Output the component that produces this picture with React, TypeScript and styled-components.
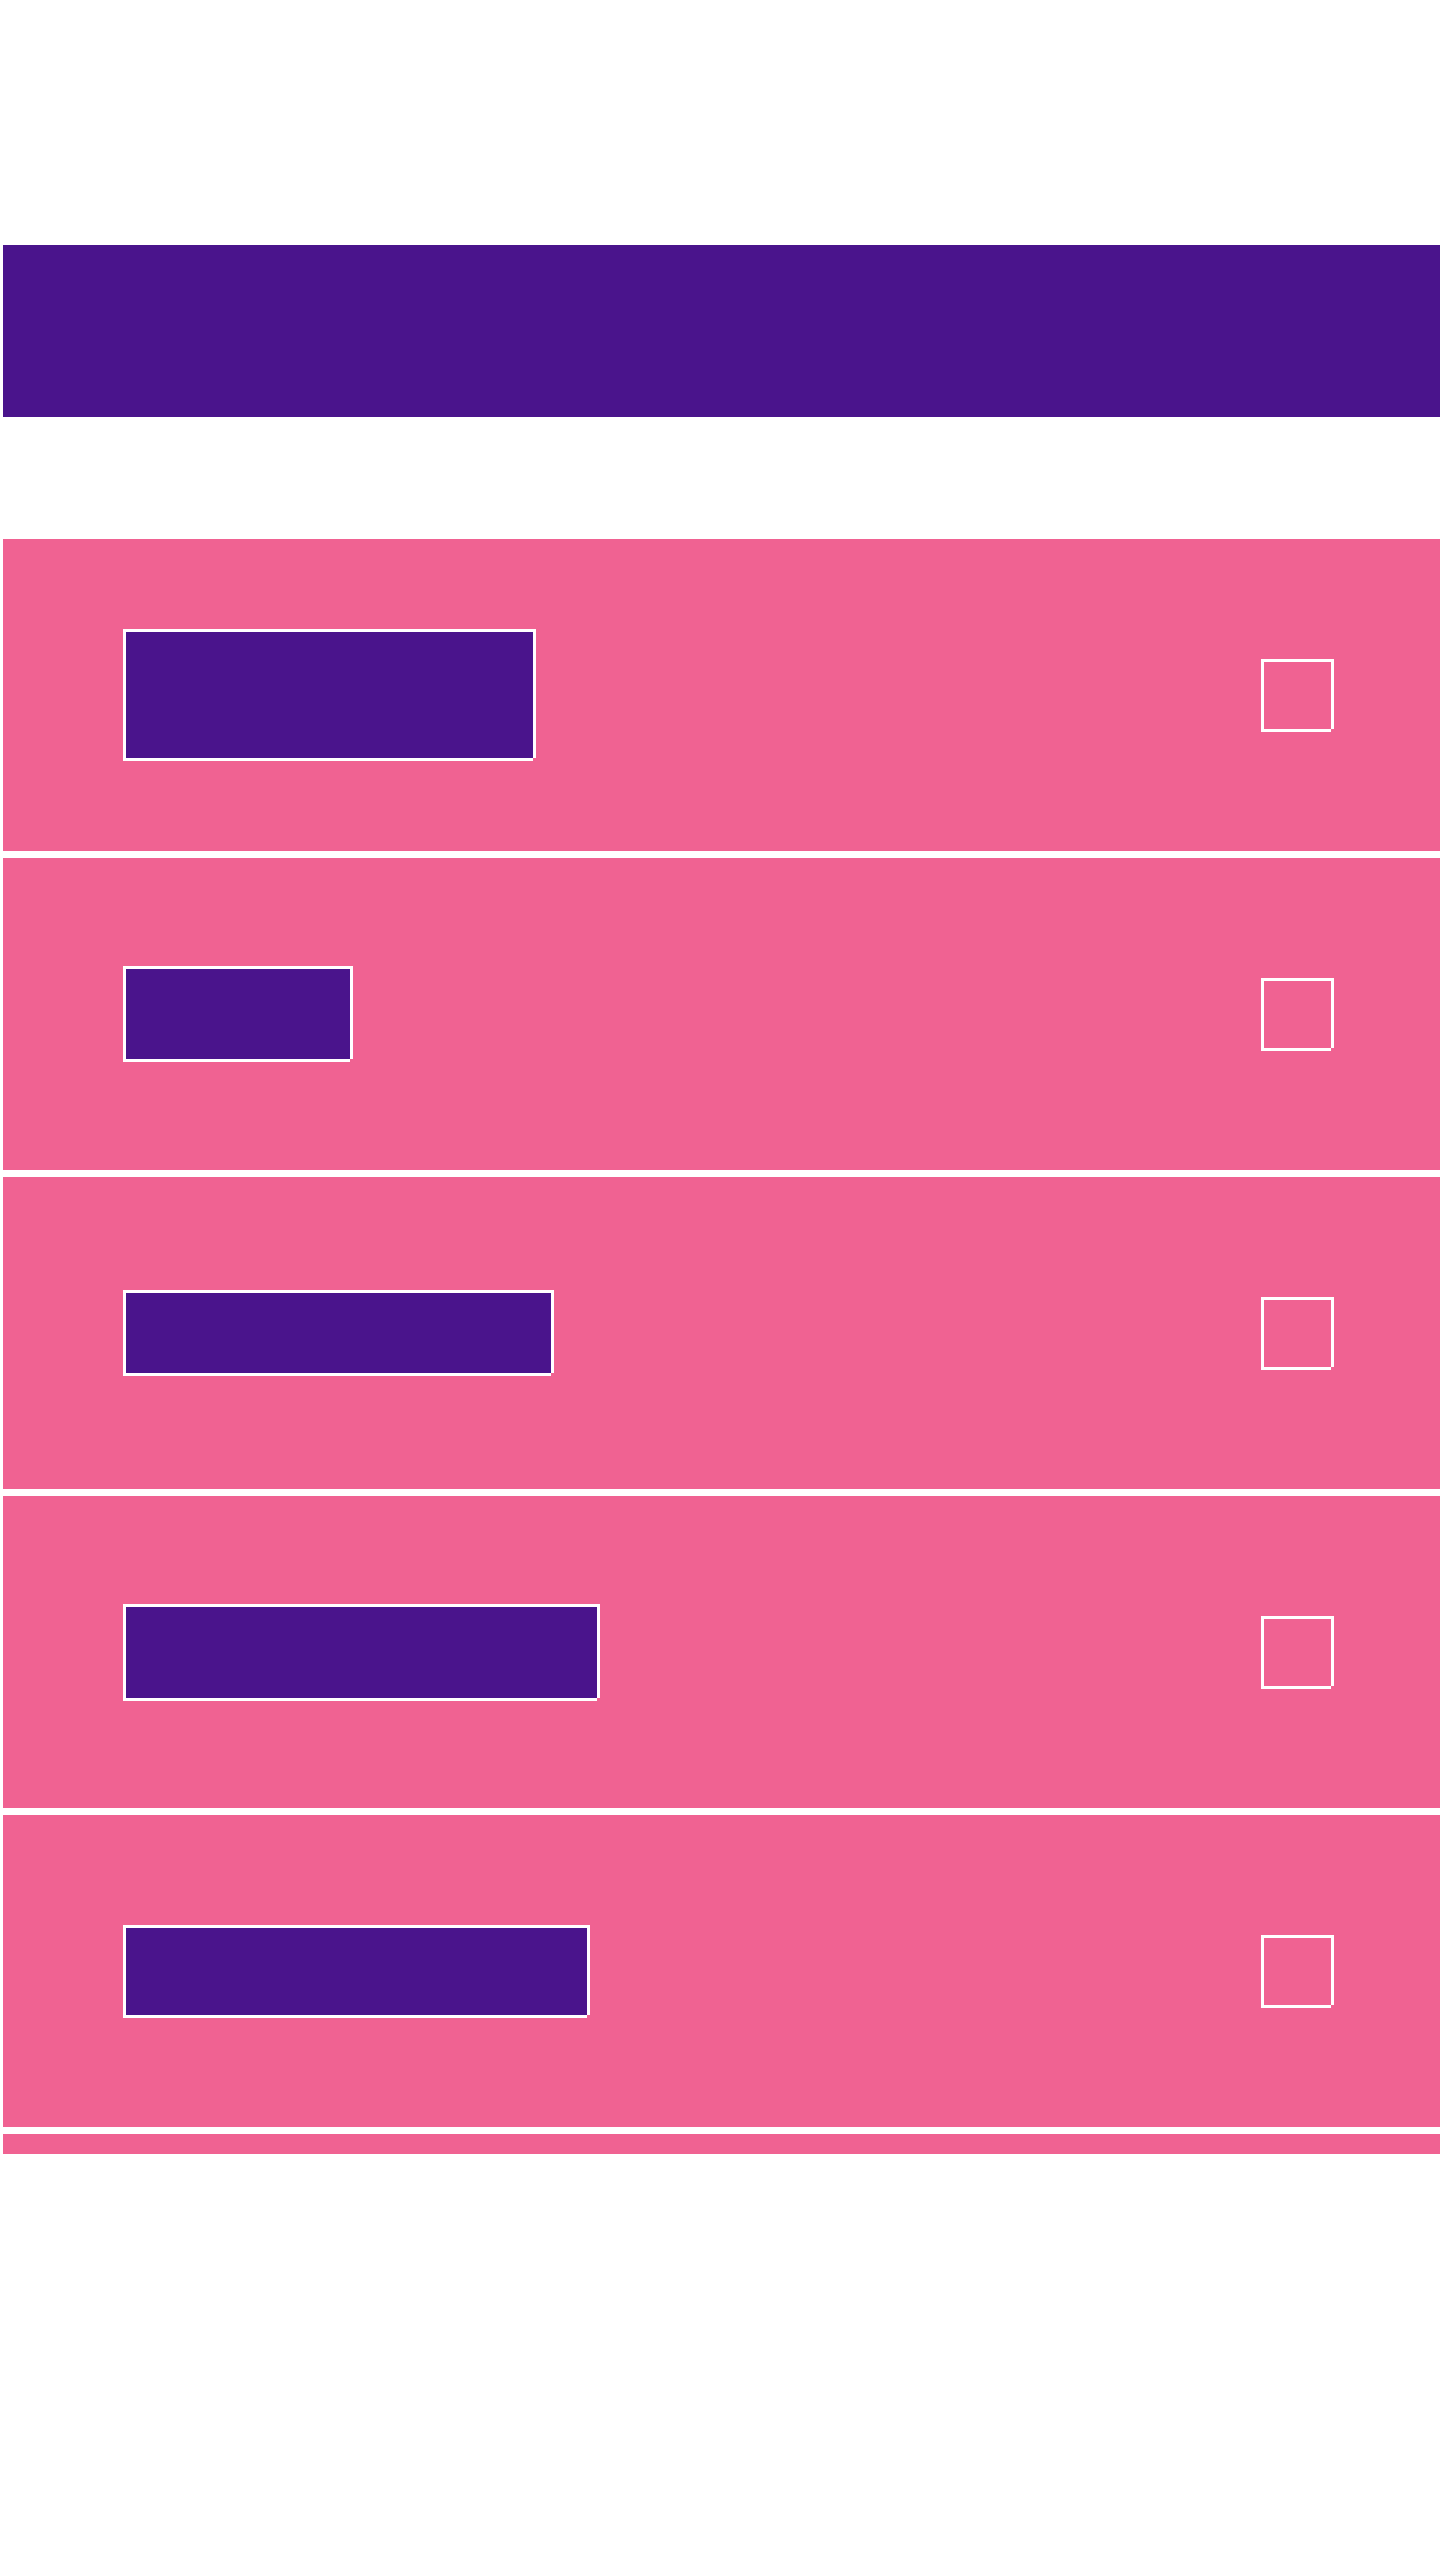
import React from "react";
import styled, { createGlobalStyle } from "styled-components";

const PURPLE = "#4A148C";
const PINK = "#F06292";

const GlobalStyle = createGlobalStyle`
  html, body {
    margin: 0;
    padding: 0;
    background: #ffffff;
    font-family: "Liberation Sans", Arial, sans-serif;
  }
`;

const Page = styled.div`
  display: flex;
  flex-direction: column;
  padding-left: 3px;
  padding-top: 245px;
  min-height: 2560px;
  box-sizing: border-box;
  overflow: hidden;
`;

const Header = styled.header`
  height: 172px;
  background: ${PURPLE};
  flex-shrink: 0;
`;

const List = styled.ul`
  list-style: none;
  margin: 122px 0 0;
  padding: 0;
  height: 1615px;
  overflow: hidden;
  display: flex;
  flex-direction: column;
  gap: 7px;
  flex-shrink: 0;
`;

const Row = styled.li`
  height: 312px;
  flex-shrink: 0;
  background: ${PINK};
  display: flex;
  align-items: center;
  justify-content: space-between;
  padding: 0 106px 0 120px;
  box-sizing: border-box;
`;

const Outlined = styled.div`
  position: relative;
  box-sizing: border-box;
  border: 3px solid #ffffff;
  flex-shrink: 0;

  &::after {
    content: "";
    position: absolute;
    right: -3px;
    bottom: -3px;
    width: 3px;
    height: 3px;
    background: ${PINK};
  }
`;

const Label = styled(Outlined)<{ $w: number; $h: number }>`
  width: ${(p) => p.$w}px;
  height: ${(p) => p.$h}px;
  background: ${PURPLE};
`;

const Check = styled(Outlined)`
  width: 73px;
  height: 73px;
  background: transparent;
`;

const items = [
  { w: 413, h: 132 },
  { w: 230, h: 96 },
  { w: 431, h: 86 },
  { w: 477, h: 97 },
  { w: 467, h: 93 },
  { w: 300, h: 90 },
];

export default function App() {
  return (
    <>
      <GlobalStyle />
      <Page>
        <Header />
        <List>
          {items.map((it, i) => (
            <Row key={i}>
              <Label $w={it.w} $h={it.h} />
              <Check role="checkbox" aria-checked={false} />
            </Row>
          ))}
        </List>
      </Page>
    </>
  );
}
